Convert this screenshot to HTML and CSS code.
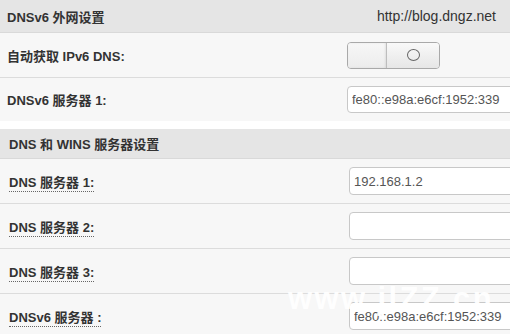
FILE: index.html
```html
<!DOCTYPE html>
<html lang="zh-CN">
<head>
<meta charset="utf-8">
<title>DNS 设置</title>
<link rel="stylesheet" href="styles.css">
</head>
<body>
<div class="page">
  <section class="section sec1">
    <div class="head">
      <span class="head-title">DNSv6 外网设置</span>
      <span class="head-url">http://blog.dngz.net</span>
    </div>
    <div class="row">
      <div class="label">自动获取 IPv6 DNS:</div>
      <div class="field">
        <div class="toggle">
          <span class="toggle-left"></span>
          <span class="toggle-right"><span class="toggle-dot"></span></span>
        </div>
      </div>
    </div>
    <div class="row last">
      <div class="label">DNSv6 服务器 1:</div>
      <div class="field"><input class="input" type="text" value="fe80::e98a:e6cf:1952:339"></div>
    </div>
  </section>

  <section class="section sec2">
    <div class="head head2">
      <span class="head-title">DNS 和 WINS 服务器设置</span>
    </div>
    <div class="row">
      <div class="label"><span class="dotted">DNS 服务器 1:</span></div>
      <div class="field"><input class="input" type="text" value="192.168.1.2"></div>
    </div>
    <div class="row">
      <div class="label"><span class="dotted">DNS 服务器 2:</span></div>
      <div class="field"><input class="input" type="text" value=""></div>
    </div>
    <div class="row">
      <div class="label"><span class="dotted">DNS 服务器 3:</span></div>
      <div class="field"><input class="input" type="text" value=""></div>
    </div>
    <div class="row">
      <div class="label"><span class="dotted">DNSv6 服务器 :</span></div>
      <div class="field"><input class="input" type="text" value="fe80::e98a:e6cf:1952:339"></div>
    </div>
  </section>
  <div class="watermark">www.jlZZ.cn</div>
</div>
</body>
</html>
```

FILE: styles.css
```css
* { box-sizing: border-box; }
html, body {
  margin: 0;
  padding: 0;
  background: #ffffff;
  overflow: hidden;
}
body {
  font-family: "Liberation Sans", Arial, "Noto Sans CJK SC", sans-serif;
  font-size: 13px;
  color: #333;
}
.page {
  position: relative;
  width: 510px;
  height: 334px;
  overflow: hidden;
}
.section { background: #f7f7f7; }
.sec1 { margin-bottom: 8px; }
.head {
  height: 33px;
  background: #e5e5e5;
  border-bottom: 1px solid #d9d9d9;
  display: flex;
  align-items: center;
  justify-content: space-between;
  padding: 0 14px 0 7px;
}
.head2 { height: 30px; padding-left: 9px; }
.head-title { font-weight: bold; color: #333; }
.head-url { font-size: 14px; color: #333; }
.row {
  height: 45px;
  border-bottom: 1px solid #dcdcdc;
  display: flex;
  align-items: center;
  padding-left: 7px;
}
.row.last { height: 43px; border-bottom: none; }
.sec2 .row { padding-left: 9px; }
.label {
  width: 340px;
  font-weight: bold;
  color: #333;
  flex: none;
}
.dotted {
  border-bottom: 1px dotted #666;
  padding-bottom: 1px;
}
.field { flex: none; }
.input {
  width: 190px;
  height: 27px;
  border: 1px solid #c8c8c8;
  border-radius: 4px;
  background: #fff;
  font-family: "Liberation Sans", Arial, sans-serif;
  font-size: 13px;
  color: #555;
  padding: 0 4px;
  outline: none;
}
.sec2 .input { height: 28px; }
.toggle {
  width: 93px;
  height: 27px;
  border: 1px solid #a9a9a9;
  border-radius: 4px;
  display: flex;
  overflow: hidden;
  background: #f2f2f2;
}
.toggle-left {
  width: 39px;
  background: linear-gradient(#f7f7f7, #ececec);
  border-right: 1px solid #bdbdbd;
  box-shadow: inset -1px 0 2px rgba(0,0,0,0.08);
}
.toggle-right {
  flex: 1;
  display: flex;
  align-items: center;
  justify-content: center;
  background: linear-gradient(#f9f9f9, #e6e6e6);
}
.toggle-dot {
  width: 13px;
  height: 12px;
  border: 1.5px solid #666;
  border-radius: 50%;
}
.watermark {
  position: absolute;
  left: 288px;
  top: 281px;
  font-family: "Liberation Sans", Arial, sans-serif;
  font-weight: bold;
  font-size: 31px;
  letter-spacing: 2.4px;
  color: #ffffff;
  opacity: 0.95;
  white-space: nowrap;
}
```
